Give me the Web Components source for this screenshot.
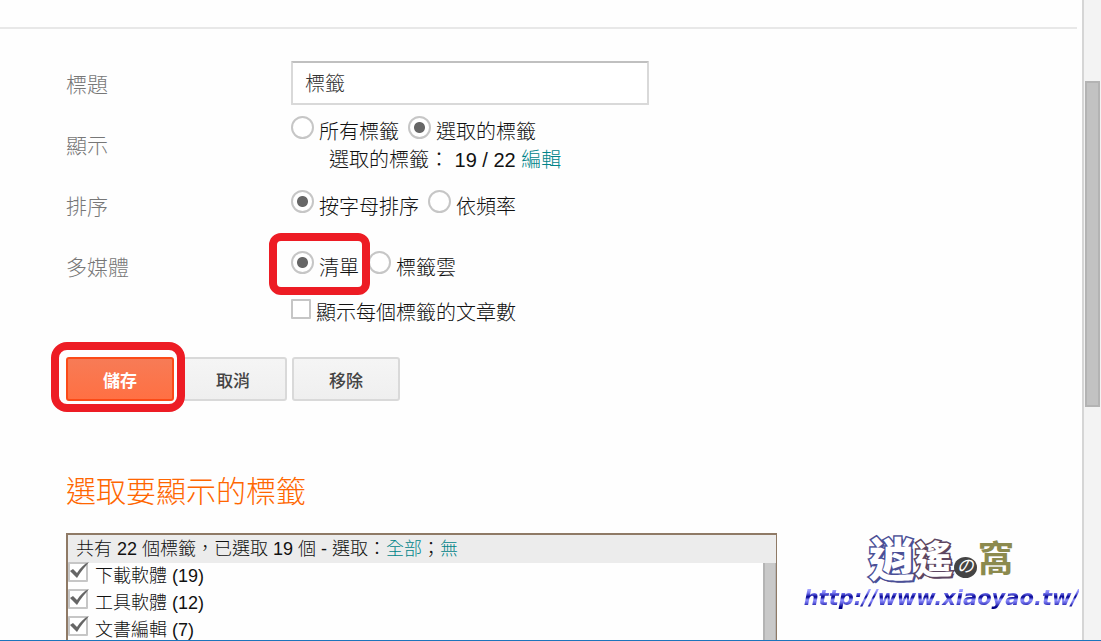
<!DOCTYPE html>
<html lang="zh-Hant">
<head>
<meta charset="utf-8">
<meta name="viewport" content="width=device-width, initial-scale=1">
<title>標籤</title>
<style>
  html, body {
    margin: 0;
    height: 100%;
  }
  body {
    background: #fefefe;
    color: #111;
    font-family: "Liberation Sans", "Noto Sans CJK TC", sans-serif;
    font-size: 20px;
    font-weight: 300;
    overflow: hidden;
  }
</style>
</head>
<body>
<widget-settings></widget-settings>

<script>
/**
 * Creates a template from a string of markup.
 *
 * @param {string} html The markup.
 * @returns {HTMLTemplateElement} The template.
 */
function createTemplate (html) {
  const template = document.createElement('template')
  template.innerHTML = html
  return template
}

const highlightTemplate = createTemplate(`
  <style>
    :host {
      display: block;
      position: relative;
    }
    .ring {
      position: absolute;
      inset: var(--ring-inset, -15px -11px -11px -15px);
      border: 8px solid #ed1c24;
      border-radius: var(--ring-radius, 16px);
      box-sizing: border-box;
      pointer-events: none;
      z-index: 1;
    }
  </style>
  <slot></slot>
  <div class="ring"></div>
`)
customElements.define('highlight-ring',
  /**
   * Draws a red ring around its content.
   */
  class extends HTMLElement {
    constructor () {
      super()
      this.attachShadow({ mode: 'open' }).appendChild(highlightTemplate.content.cloneNode(true))
    }
  })

const rowTemplate = createTemplate(`
  <style>
    :host {
      display: grid;
      grid-template-columns: 225px minmax(0, 1fr);
      align-items: center;
      min-height: 61px;
    }
    .name {
      color: #777;
      font-size: 21px;
      line-height: 27px;
    }
  </style>
  <div class="name"></div>
  <div><slot></slot></div>
`)
customElements.define('form-row',
  /**
   * A row with a name to the left and its controls to the right.
   */
  class extends HTMLElement {
    constructor () {
      super()
      this.attachShadow({ mode: 'open' }).appendChild(rowTemplate.content.cloneNode(true))
    }

    connectedCallback () {
      this.shadowRoot.querySelector('.name').textContent = this.getAttribute('name')
    }
  })

const textFieldTemplate = createTemplate(`
  <style>
    :host {
      display: block;
      max-width: 358px;
      padding-bottom: 4px;
    }
    input {
      width: 100%;
      height: 44px;
      box-sizing: border-box;
      display: block;
      padding: 0 12px;
      border: 2px solid #d9d9d9;
      border-top-color: #c0c0c0;
      border-radius: 1px;
      background: #fff;
      color: #333;
      font: inherit;
      outline: none;
    }
  </style>
  <input type="text">
`)
customElements.define('text-field',
  /**
   * A single line text box.
   */
  class extends HTMLElement {
    constructor () {
      super()
      this.attachShadow({ mode: 'open' }).appendChild(textFieldTemplate.content.cloneNode(true))
    }

    connectedCallback () {
      const input = this.shadowRoot.querySelector('input')
      input.value = this.getAttribute('value')
      input.setAttribute('aria-label', this.getAttribute('label'))
    }
  })

const radioGroupTemplate = createTemplate(`
  <style>
    :host {
      display: block;
    }
    .options {
      display: flex;
      gap: 9px;
    }
    label {
      display: flex;
      align-items: center;
      gap: 5px;
      height: 30px;
      line-height: 30px;
      white-space: nowrap;
    }
    input {
      appearance: none;
      flex: none;
      width: 23px;
      height: 23px;
      margin: 0 0 10px;
      border: 2px solid #c6c6c6;
      border-radius: 50%;
      background: #fff;
    }
    input:checked {
      background: radial-gradient(circle, #666 5px, #fff 6px);
    }
    highlight-ring {
      --ring-inset: -20px -11px -12px -22px;
      --ring-radius: 12px;
    }
  </style>
  <div class="options" role="radiogroup"></div>
`)
customElements.define('radio-group',
  /**
   * A line of radio buttons, read from the options attribute.
   */
  class extends HTMLElement {
    constructor () {
      super()
      this.attachShadow({ mode: 'open' }).appendChild(radioGroupTemplate.content.cloneNode(true))
    }

    connectedCallback () {
      const wrapper = this.shadowRoot.querySelector('.options')
      wrapper.setAttribute('aria-label', this.getAttribute('label'))
      for (const option of this.getAttribute('options').split('|')) {
        const label = document.createElement('label')
        const input = document.createElement('input')
        input.type = 'radio'
        input.name = 'option'
        input.value = option
        input.checked = option === this.getAttribute('value')
        const text = document.createElement('span')
        text.textContent = option
        label.append(input, text)

        if (option === this.getAttribute('highlight')) {
          const ring = document.createElement('highlight-ring')
          ring.append(label)
          wrapper.append(ring)
        } else {
          wrapper.append(label)
        }
      }
    }
  })

const tickBoxTemplate = createTemplate(`
  <style>
    :host {
      display: block;
    }
    label {
      display: flex;
      align-items: center;
      gap: var(--tick-gap, 5px);
      height: 27px;
      line-height: 27px;
      white-space: nowrap;
    }
    .box {
      display: grid;
      flex: none;
      width: 20px;
      height: 20px;
      margin-bottom: 9px;
    }
    input, svg {
      grid-area: 1 / 1;
    }
    input {
      appearance: none;
      width: 20px;
      height: 20px;
      margin: 0;
      box-sizing: border-box;
      border: 2px solid #c6c6c6;
      border-radius: 1px;
      background: #fff;
    }
    svg {
      display: none;
      overflow: visible;
      pointer-events: none;
    }
    input:checked + svg {
      display: block;
    }
  </style>
  <label>
    <span class="box">
      <input type="checkbox">
      <svg width="20" height="20" viewBox="0 0 20 20" aria-hidden="true">
        <path d="M2 9 L5 7 L9 11 C12 6 16 2 21 0 C17 5 13 9 9 16 Z" fill="#666"/>
      </svg>
    </span>
    <span><slot></slot></span>
  </label>
`)
customElements.define('tick-box',
  /**
   * A check box with its label.
   */
  class extends HTMLElement {
    constructor () {
      super()
      this.attachShadow({ mode: 'open' }).appendChild(tickBoxTemplate.content.cloneNode(true))
    }

    connectedCallback () {
      this.shadowRoot.querySelector('input').checked = this.hasAttribute('checked')
    }
  })

const buttonTemplate = createTemplate(`
  <style>
    :host {
      display: block;
    }
    button {
      display: block;
      min-width: 108px;
      height: 44px;
      padding: 0 16px;
      border: 2px solid #d9d9d9;
      border-radius: 3px;
      background: linear-gradient(#f5f5f5, #efefef);
      color: #444;
      font: 500 17px "Liberation Sans", "Noto Sans CJK TC", sans-serif;
    }
    :host([primary]) button {
      border-color: #fb4a17;
      background: linear-gradient(#f77b56, #ff7043);
      color: #fff;
      font-weight: bold;
    }
  </style>
  <button type="button"><slot></slot></button>
`)
customElements.define('push-button',
  /**
   * A push button, orange when it has the primary attribute.
   */
  class extends HTMLElement {
    constructor () {
      super()
      this.attachShadow({ mode: 'open' }).appendChild(buttonTemplate.content.cloneNode(true))
    }
  })

const labelPickerTemplate = createTemplate(`
  <style>
    :host {
      display: block;
      max-width: 711px;
      height: 160px;
      box-sizing: border-box;
      border: 2px solid #8f7a66;
      border-right-width: 1px;
      font-size: 18px;
      overflow: hidden;
    }
    .summary {
      height: 28px;
      line-height: 28px;
      padding-left: 8px;
      background: #ececec;
      white-space: nowrap;
    }
    .body {
      display: flex;
      height: 100%;
    }
    .list {
      flex: 1;
      --tick-gap: 7px;
    }
    .bar {
      width: 13px;
      box-sizing: border-box;
      border: solid #b4b4b4;
      border-width: 0 1px 0 2px;
      background: #c9c9c9;
    }
  </style>
  <div class="summary"><slot name="summary"></slot></div>
  <div class="body">
    <div class="list"><slot></slot></div>
    <div class="bar"></div>
  </div>
`)
customElements.define('label-picker',
  /**
   * A scrolling list of labels under a summary line.
   */
  class extends HTMLElement {
    constructor () {
      super()
      this.attachShadow({ mode: 'open' }).appendChild(labelPickerTemplate.content.cloneNode(true))
    }
  })

const scrollRailTemplate = createTemplate(`
  <style>
    :host {
      display: grid;
      grid-template-rows: 81fr 327fr 233fr;
      flex: none;
      width: 19px;
      box-sizing: border-box;
      padding-left: 1px;
      padding-right: 1px;
      border-left: 2px solid #d5d5d5;
      background: #f3f3f3;
    }
    .thumb {
      grid-row: 2;
      border: 2px solid #b3b3b3;
      background: #c2c2c2;
    }
  </style>
  <div class="thumb"></div>
`)
customElements.define('scroll-rail',
  /**
   * The scroll bar of the dialog.
   */
  class extends HTMLElement {
    constructor () {
      super()
      this.attachShadow({ mode: 'open' }).appendChild(scrollRailTemplate.content.cloneNode(true))
    }
  })

const siteMarkTemplate = createTemplate(`
  <style>
    :host {
      display: flex;
      flex-direction: column;
      align-items: center;
      font-weight: bold;
      white-space: nowrap;
    }
    .name {
      display: flex;
      align-items: center;
      height: 52px;
      line-height: 52px;
      paint-order: stroke fill;
    }
    .first, .second {
      color: #fff;
      font-weight: 900;
    }
    .first {
      font-size: 46px;
      -webkit-text-stroke: 3px #4a4f96;
      text-shadow: 2px 2px #4a4f96;
    }
    .second {
      font-size: 38px;
      -webkit-text-stroke: 3px #5d4560;
      text-shadow: 2px 2px #5d4560;
    }
    .no {
      width: 23px;
      height: 21px;
      margin: 14px 1px 0;
      border-radius: 50%;
      background: #444;
      color: #fff;
      font-size: 17px;
      font-style: italic;
      font-weight: normal;
      line-height: 20px;
      text-align: center;
    }
    .last {
      color: #8c8a4e;
      font-size: 36px;
    }
    a {
      background: linear-gradient(#a0a0ff 4px, #7474f0 7px, #000090 11px, #9090ff 14px, #6060e0 17px, #000088 21px);
      background-clip: text;
      -webkit-background-clip: text;
      color: transparent;
      font: italic bold 21px/24px "DejaVu Sans", sans-serif;
      text-decoration: none;
    }
  </style>
  <div class="name"><span class="first">逍</span><span class="second">遙</span><span class="no">の</span><span class="last">窩</span></div>
  <a href="http://www.xiaoyao.tw/">http://www.xiaoyao.tw/</a>
`)
customElements.define('site-mark',
  /**
   * The name and address of the site.
   */
  class extends HTMLElement {
    constructor () {
      super()
      this.attachShadow({ mode: 'open' }).appendChild(siteMarkTemplate.content.cloneNode(true))
    }
  })

const settingsTemplate = createTemplate(`
  <style>
    :host {
      display: flex;
      position: relative;
      height: 100vh;
      box-sizing: border-box;
      border-bottom: 1px solid #1b75bc;
      overflow: hidden;
    }
    main {
      flex: 1;
      min-width: 0;
      padding-top: 27px;
    }
    hr {
      height: 2px;
      margin: 0 5px 0 0;
      border: 0;
      background: #e8e8e8;
    }
    form, section {
      padding: 0 16px 0 66px;
    }
    form {
      padding-top: 25px;
    }
    a {
      color: #008489;
      text-decoration: none;
    }
    .selected {
      padding-left: 38px;
      line-height: 27px;
    }
    .count {
      padding: 2px 0 0 225px;
    }
    .buttons {
      display: flex;
      gap: 5px;
      margin-top: 30px;
    }
    h2 {
      margin: 71px 0 21px;
      color: #ff6600;
      font-size: 30px;
      font-weight: 300;
      line-height: 40px;
    }
    site-mark {
      position: absolute;
      right: 22px;
      bottom: 30px;
    }
  </style>
  <main>
    <hr>
    <form>
      <form-row name="標題">
        <text-field label="標題" value="標籤"></text-field>
      </form-row>
      <form-row name="顯示">
        <radio-group label="顯示" options="所有標籤|選取的標籤" value="選取的標籤"></radio-group>
        <div class="selected">選取的標籤： 19 / 22 <a href="#labels">編輯</a></div>
      </form-row>
      <form-row name="排序">
        <radio-group label="排序" options="按字母排序|依頻率" value="按字母排序"></radio-group>
      </form-row>
      <form-row name="多媒體">
        <radio-group label="多媒體" options="清單|標籤雲" value="清單" highlight="清單"></radio-group>
      </form-row>
      <div class="count"><tick-box>顯示每個標籤的文章數</tick-box></div>
      <div class="buttons">
        <highlight-ring><push-button primary>儲存</push-button></highlight-ring>
        <push-button>取消</push-button>
        <push-button>移除</push-button>
      </div>
    </form>
    <section id="labels">
      <h2>選取要顯示的標籤</h2>
      <label-picker>
        <span slot="summary">共有 22 個標籤，已選取 19 個 - 選取：<a href="#all">全部</a>；<a href="#none">無</a></span>
        <tick-box checked>下載軟體 (19)</tick-box>
        <tick-box checked>工具軟體 (12)</tick-box>
        <tick-box checked>文書編輯 (7)</tick-box>
      </label-picker>
    </section>
  </main>
  <scroll-rail></scroll-rail>
  <site-mark></site-mark>
`)
customElements.define('widget-settings',
  /**
   * The settings dialog of the labels widget.
   */
  class extends HTMLElement {
    constructor () {
      super()
      this.attachShadow({ mode: 'open' }).appendChild(settingsTemplate.content.cloneNode(true))
    }
  })
</script>
</body>
</html>
